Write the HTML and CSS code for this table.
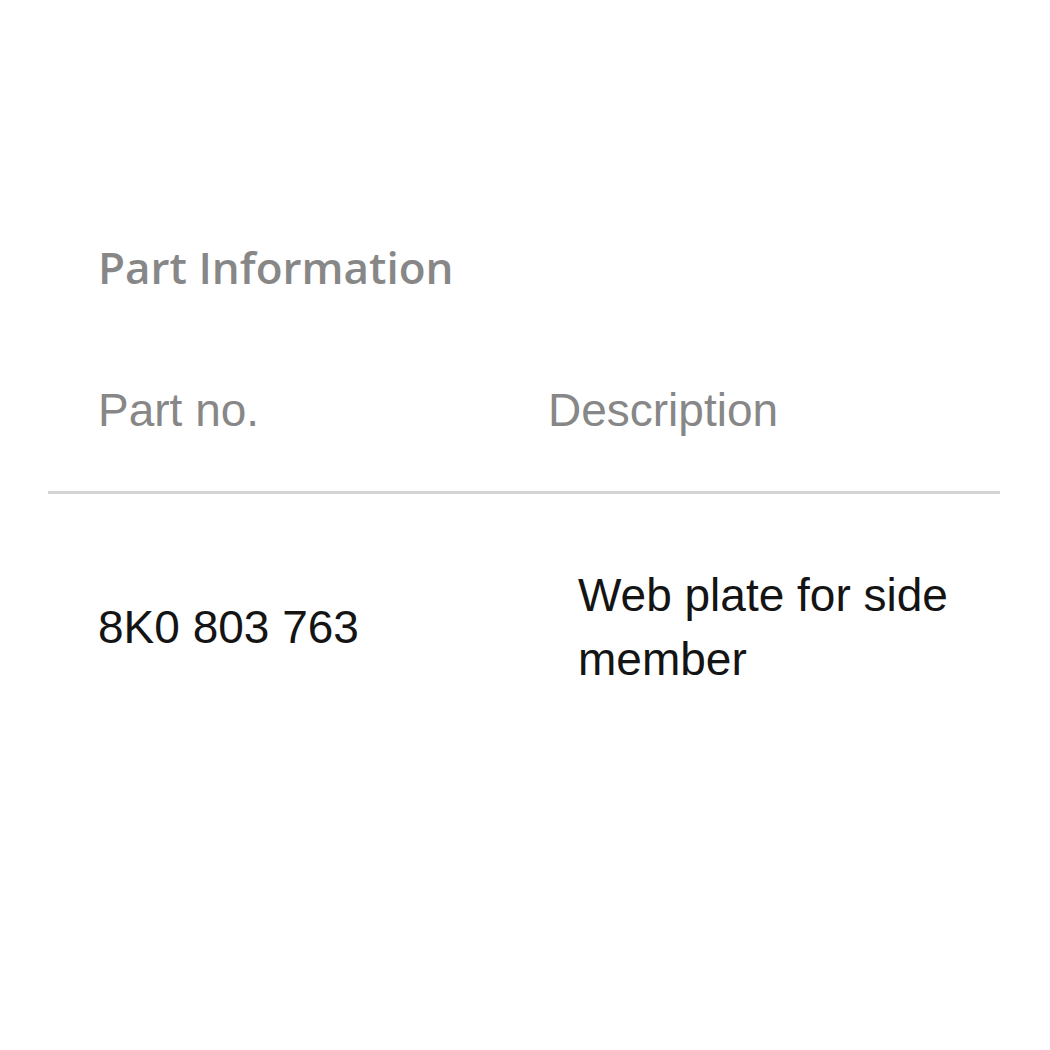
FILE: index.html
```html
<!DOCTYPE html>
<html>
<head>
<meta charset="utf-8">
<link rel="stylesheet" href="styles.css">
</head>
<body>
<section class="panel">
  <h2 class="title">Part Information</h2>
  <div class="table">
    <div class="row head">
      <div class="cell c1">Part no.</div>
      <div class="cell c2">Description</div>
    </div>
    <div class="row body-row">
      <div class="cell c1">8K0 803 763</div>
      <div class="cell c2 desc">Web plate for side member</div>
    </div>
  </div>
</section>
</body>
</html>
```

FILE: styles.css
```css
html, body {
  margin: 0;
  padding: 0;
  background: #ffffff;
}
.panel {
  width: 952px;
  margin-left: 48px;
  padding-top: 239px;
}
.title {
  margin: 0 0 0 50px;
  font-family: "Open Sans", "Noto Sans", sans-serif;
  font-weight: 600;
  font-size: 44px;
  line-height: 57px;
  color: #878787;
}
.table {
  margin-top: 84px;
  font-family: "Liberation Sans", Arial, sans-serif;
  font-size: 46px;
  line-height: 60px;
}
.row {
  display: grid;
  grid-template-columns: 500px 1fr;
  align-items: center;
}
.head {
  color: #878787;
  padding-bottom: 51px;
  border-bottom: 3px solid #d4d4d4;
}
.cell.c1 {
  padding-left: 50px;
}
.body-row {
  padding-top: 69px;
  color: #141414;
}
.desc {
  padding-left: 30px;
  padding-right: 40px;
  line-height: 64px;
}
```
